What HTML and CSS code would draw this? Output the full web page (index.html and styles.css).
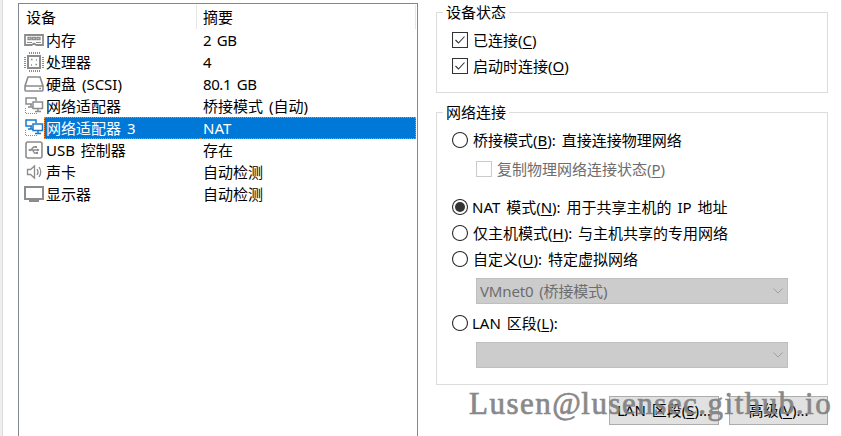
FILE: index.html
```html
<!DOCTYPE html>
<html lang="zh-CN">
<head>
<meta charset="utf-8">
<title>虚拟机设置</title>
<link rel="stylesheet" href="styles.css">
</head>
<body>
<main class="window">
  <section class="devices">
    <div class="head"><span class="name">设备</span><span class="summary">摘要</span></div>
    <div class="row">
      <svg class="icon" viewBox="0 0 20 22"><path d="M1 6h18v10h-6.500l-2.500-1.500-2.500 1.500H1z" stroke-width="1.800"/><path d="M4 8.500h3v2h-3zM8.500 8.500h3v2h-3zM13 8.500h3v2h-3z"/><path d="M3 13.500h5M12 13.500h5" stroke-width="1"/></svg>
      <span class="name">内存</span><span class="summary tight">2 GB</span></div>
    <div class="row">
      <svg class="icon" viewBox="0 0 20 22"><path d="M4 5h12v12H4z" stroke-width="2"/><path stroke-width="2" stroke-dasharray="1 1" d="M5 2h11M5 20h11M1 6h0M1 6v11M19 6v11"/><path d="M7 8.500h1.500M11.500 13.500h1.500M12 9h1M7 14h1"/></svg>
      <span class="name">处理器</span><span class="summary">4</span></div>
    <div class="row">
      <svg class="icon" viewBox="0 0 20 22"><path d="M4 4h12l3 9v4q0 1-1 1H2q-1 0-1-1v-4zM1 13h18M15 15.500h2" stroke-width="1.600"/></svg>
      <span class="name">硬盘 (SCSI)</span><span class="summary tight">80.1 GB</span></div>
    <div class="row">
      <svg class="icon" viewBox="0 0 20 22"><path stroke-width="1.500" d="M8 9H2v-6h10V6M4 12h5M7 9v3M9 7h9.500v6.500H9zM14 13v3M11 16.500h6"/><path stroke-dasharray="1 1" stroke-width="1" d="M1.500 13v6M2 18.500h11"/></svg>
      <span class="name">网络适配器</span><span class="summary">桥接模式 (自动)</span></div>
    <div class="row selected">
      <svg class="icon" viewBox="0 0 20 22"><path stroke-width="1.500" class="blue" d="M8 9H2v-6h10V6M4 12h5M7 9v3M9 7h9.500v6.500H9zM14 13v3M11 16.500h6"/><path stroke-dasharray="1 1" stroke-width="1" d="M1.500 13v6M2 18.500h11"/></svg>
      <span class="name">网络适配器 3</span><span class="summary">NAT</span></div>
    <div class="row">
      <svg class="icon" viewBox="0 0 20 22"><rect x="2" y="3" width="16" height="16" rx="2" stroke-width="1.600"/><path d="M5 11h10M7 11l2.500-3h2M8.500 11l2 3h2"/><path class="solid" d="M4 11L6.500 9.500v3zM13 9.500l2.500 1.500-2.500 1.500zM11 7h2v2h-2zM12 13h2v2h-2z"/></svg>
      <span class="name">USB 控制器</span><span class="summary">存在</span></div>
    <div class="row">
      <svg class="icon" viewBox="0 0 20 22"><path d="M3.500 8.500h3L10.500 5v12l-4-3.500h-3zM13 8q2 3 0 6M15 6q3.500 5 0 10"/></svg>
      <span class="name">声卡</span><span class="summary">自动检测</span></div>
    <div class="row">
      <svg class="icon" viewBox="0 0 20 22"><path d="M1 4h18v12H1z" stroke-width="2"/><path d="M5 18h10" stroke-width="2"/></svg>
      <span class="name">显示器</span><span class="summary">自动检测</span></div>
  </section>

  <section class="settings">
    <div class="group status">
      <h2>设备状态</h2>
      <label class="option"><svg class="mark" viewBox="0 0 16 16"><path d="M.5.5h15v15H.5zM3.500 8l3 3 6-6.500"/></svg><span>已连接(<u>C</u>)</span></label>
      <label class="option"><svg class="mark" viewBox="0 0 16 16"><path d="M.5.5h15v15H.5zM3.500 8l3 3 6-6.500"/></svg><span>启动时连接(<u>O</u>)</span></label>
    </div>
    <div class="group network">
      <h2>网络连接</h2>
      <label class="option"><svg class="mark" viewBox="0 0 16 16"><circle cx="8" cy="8" r="7.500"/></svg><span>桥接模式(<u>B</u>): 直接连接物理网络</span></label>
      <label class="option nested"><svg class="mark" viewBox="0 0 16 16"><path d="M.5.5h15v15H.5z"/></svg><span>复制物理网络连接状态(<u>P</u>)</span></label>
      <label class="option nat"><svg class="mark" viewBox="0 0 16 16"><circle cx="8" cy="8" r="7.500"/><circle class="dot" cx="8" cy="8" r="5"/></svg><span>NAT 模式(<u>N</u>): 用于共享主机的 IP 地址</span></label>
      <label class="option"><svg class="mark" viewBox="0 0 16 16"><circle cx="8" cy="8" r="7.500"/></svg><span>仅主机模式(<u>H</u>): 与主机共享的专用网络</span></label>
      <label class="option"><svg class="mark" viewBox="0 0 16 16"><circle cx="8" cy="8" r="7.500"/></svg><span>自定义(<u>U</u>): 特定虚拟网络</span></label>
      <div class="select"><span>VMnet0 (桥接模式)</span><svg class="chevron" viewBox="0 0 10 6"><path d="M.5.5L5 5 9.500.5"/></svg></div>
      <label class="option lan"><svg class="mark" viewBox="0 0 16 16"><circle cx="8" cy="8" r="7.500"/></svg><span>LAN 区段(<u>L</u>):</span></label>
      <div class="select"><span></span><svg class="chevron" viewBox="0 0 10 6"><path d="M.5.5L5 5 9.500.5"/></svg></div>
    </div>
    <div class="buttons">
      <div class="button wide">LAN 区段(<u>S</u>)...</div>
      <div class="button">高级(<u>V</u>)...</div>
    </div>
  </section>
  <div class="watermark">Lusen<span class="at">@</span>lusensec.github.io</div>
</main>
</body>
</html>
```
FILE: styles.css
```css
* { box-sizing: border-box; }
body { margin: 0; background: #efefef; }
.window {
  position: relative;
  display: flex;
  width: 840px;
  height: 436px;
  margin-left: 2px;
  overflow: hidden;
  padding: 3px 0 0 15px;
  border-left: 1px solid #dcdcdc;
  border-right: 1px solid #dcdcdc;
  background: #fff;
  font: 15px/22px "Noto Sans", "Noto Sans CJK SC", sans-serif;
  word-spacing: 2px;
  color: #000;
  white-space: nowrap;
}
.devices {
  width: 400px;
  height: 440px;
  flex: none;
  border: 1px solid #828790;
}
.head { display: flex; height: 25px; padding: 1px 1px 0 7px; }
.head .name { width: 171px; border-right: 1px solid #e5e5e5; }
.head .summary { flex: 1; padding-left: 6px; border-right: 1px solid #e5e5e5; }
.head span { line-height: 24px; }
.row { display: flex; height: 22px; padding: 0 1px 0 5px; line-height: 22px; }
.icon { width: 20px; height: 22px; flex: none; fill: none; stroke: #8c8c8c; stroke-width: 1.3; }
.icon .blue { stroke: #1979ca; }
.icon .solid { fill: #8c8c8c; stroke: none; }
.row .name { width: 156px; padding-left: 2px; }
.row .summary { flex: 1; padding-left: 3px; }
.row .tight { letter-spacing: -.4px; }
.selected .name, .selected .summary {
  background: #0078d7;
  color: #fff;
  border: 1px dotted #ff8728;
  line-height: 20px;
}
.selected .name { border-right: 0; padding-left: 1px; }
.selected .summary { border-left: 0; }

.settings { width: 392px; margin-left: 18px; padding-top: 9px; }
.group { border: 1px solid #dcdcdc; }
.group h2 {
  width: max-content;
  height: 22px;
  margin: -12px 0 0 6px;
  padding: 0 3px;
  background: #fff;
  font-size: 15px;
  font-weight: normal;
  line-height: 22px;
}
.status { height: 81px; }
.network { height: 273px; margin-top: 19px; }
.option { display: flex; align-items: center; height: 26px; padding-left: 15px; line-height: 26px; }
.status h2 + .option, .network h2 + .option { margin-top: 4px; }
.mark { width: 16px; height: 16px; flex: none; margin-right: 5px; fill: none; stroke: #333; stroke-width: 1.1; }
.mark .dot { fill: #333; stroke: none; }
.nested { padding-left: 39px; margin-top: 3px; color: #6d6d6d; }
.nested .mark { stroke: #ccc; }
.nat { margin-top: 12px; }
.nat .mark, .lan .mark { margin-right: 4px; }
.select {
  display: flex;
  align-items: center;
  justify-content: space-between;
  width: 312px;
  height: 26px;
  margin: 6px 0 0 39px;
  padding: 0 4px 0 3px;
  border: 1px solid #bfbfbf;
  background: #ccc;
  color: #6d6d6d;
}
.select span { letter-spacing: -.15px; }
.chevron { width: 10px; height: 6px; flex: none; fill: none; stroke: #a0a0a0; }
.lan { margin-top: 6px; }
u { text-decoration-thickness: 1px; text-underline-offset: 2px; }
.buttons { display: flex; justify-content: flex-end; gap: 10px; margin-top: 11px; }
.button {
  width: 99px;
  height: 29px;
  border: 1px solid #adadad;
  background: #e1e1e1;
  text-align: center;
  line-height: 27px;
}
.button.wide { width: 110px; }
.watermark {
  position: absolute;
  left: 466px;
  top: 386px;
  font: 31px/36px "Liberation Serif", serif;
  letter-spacing: 1.5px;
  color: #808080;
  -webkit-text-stroke: .7px #808080;
  opacity: .92;
}
.at { letter-spacing: .5px; }
```
